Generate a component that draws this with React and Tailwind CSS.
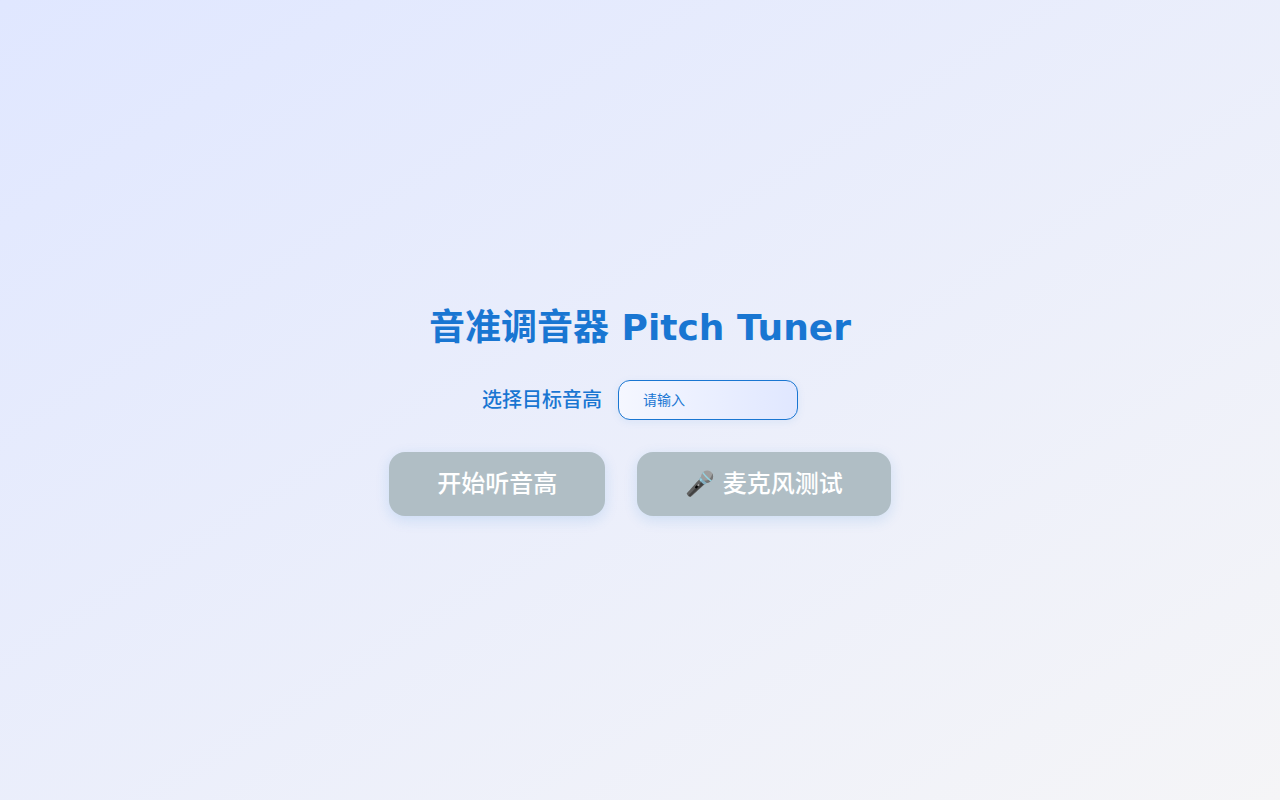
import { useState } from 'react';

const FONT = "font-['DejaVu_Sans','Noto_Sans_CJK_SC',sans-serif]";

function TunerButton({ children }) {
  return (
    <button
      type="button"
      disabled
      className="px-12 py-4 text-2xl font-medium text-white bg-[#b0bec5] rounded-2xl shadow-[0_4px_14px_rgba(25,118,210,0.15)] cursor-not-allowed"
    >
      {children}
    </button>
  );
}

export default function App() {
  const [note, setNote] = useState('');

  return (
    <div
      className={`min-h-screen w-full flex flex-col items-center justify-center pt-6 bg-gradient-to-br from-[#e0e7ff] to-[#f5f5f7] ${FONT}`}
    >
      <h1 className="text-4xl font-bold text-[#1976d2]">音准调音器 Pitch Tuner</h1>

      <div className="flex items-center gap-4 mt-8">
        <label className="text-xl font-medium text-[#1976d2]">选择目标音高</label>
        <input
          value={note}
          onChange={(e) => setNote(e.target.value)}
          placeholder="请输入"
          className="w-[180px] h-10 px-6 text-sm text-[#1976d2] placeholder:text-[#1976d2] border border-[#1976d2] rounded-xl bg-gradient-to-r from-[#f5f7ff] to-[#e0e7ff] shadow-[0_2px_8px_rgba(25,118,210,0.08)] outline-none"
        />
      </div>

      <div className="flex gap-8 mt-8">
        <TunerButton>开始听音高</TunerButton>
        <TunerButton>🎤 麦克风测试</TunerButton>
      </div>
    </div>
  );
}
